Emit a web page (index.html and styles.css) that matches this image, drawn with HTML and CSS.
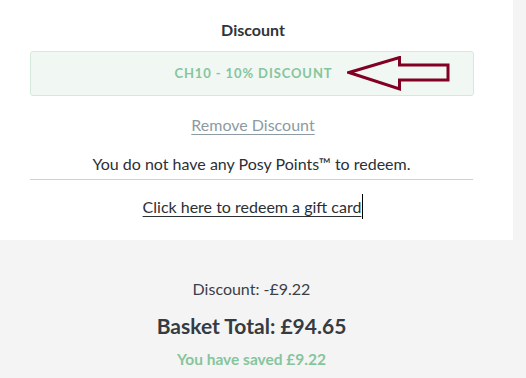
FILE: index.html
```html
<!DOCTYPE html>
<html>
<head>
<meta charset="utf-8">
<link rel="stylesheet" href="styles.css">
</head>
<body>
<div class="page">
  <section class="panel">
    <h2 class="title">Discount</h2>
    <div class="code-box">
      <span class="code">CH10 - 10% DISCOUNT</span>
      <svg class="arrow" width="104" height="36" viewBox="0 0 104 36">
        <path d="M2 16.5 L52.5 1.5 L52.5 9 L101 9 L101 24 L52.5 24 L52.5 33 Z" fill="none" stroke="#820021" stroke-width="3" stroke-linejoin="miter"/>
      </svg>
    </div>
    <a class="remove">Remove Discount</a>
    <p class="points">You do not have any Posy Points™ to redeem.</p>
    <div class="gift-row"><a class="gift">Click here to redeem a gift card</a><span class="caret"></span></div>
  </section>
  <section class="totals">
    <p class="disc">Discount: -£9.22</p>
    <p class="total">Basket Total: £94.65</p>
    <p class="saved">You have saved £9.22</p>
  </section>
</div>
</body>
</html>
```
FILE: styles.css
```css
html, body {
  margin: 0;
  padding: 0;
  background: #f4f4f4;
}
body {
  font-family: Lato, "Noto Sans", sans-serif;
  color: #353b40;
}
.page {
  width: 526px;
  height: 378px;
  overflow: hidden;
}
.panel {
  width: 513px;
  height: 240px;
  background: #ffffff;
  box-sizing: border-box;
  padding: 21px 0 0 30px;
  display: flex;
  flex-direction: column;
  align-items: flex-start;
}
.title {
  margin: 0;
  width: 443px;
  text-align: center;
  font-size: 16px;
  font-weight: 700;
  line-height: 18px;
  color: #2f3438;
  padding-left: 3px;
  box-sizing: border-box;
}
.code-box {
  margin-top: 12px;
  width: 444px;
  height: 45px;
  box-sizing: border-box;
  border: 1px solid #d3eadb;
  border-radius: 3px;
  background: #f1f8f4;
  position: relative;
  display: flex;
  align-items: center;
  justify-content: center;
}
.code {
  font-size: 13px;
  font-weight: 700;
  letter-spacing: 0.9px;
  color: #86c59c;
  margin-left: 3px;
  margin-top: -1px;
}
.arrow {
  position: absolute;
  left: 316px;
  top: 4px;
}
.remove {
  margin-top: 19px;
  width: 443px;
  text-align: center;
  font-size: 16px;
  line-height: 20px;
  color: #8c9aa3;
  text-decoration: underline;
  text-underline-offset: 3px;
  padding-left: 3px;
  box-sizing: border-box;
}
.points {
  margin: 19px 0 0 0;
  width: 443px;
  text-align: center;
  font-size: 16px;
  line-height: 20px;
  padding-bottom: 5px;
  border-bottom: 1px solid #d0d0d0;
  color: #2b3035;
}
.gift-row {
  margin-top: 17px;
  width: 443px;
  display: flex;
  justify-content: center;
  align-items: flex-start;
  padding-left: 3px;
  box-sizing: border-box;
}
.gift {
  font-size: 16px;
  line-height: 20px;
  color: #2b3035;
  text-decoration: underline;
  text-underline-offset: 3px;
}
.caret {
  width: 1px;
  height: 25px;
  background: #000;
  margin-top: -3px;
  margin-left: 1px;
}
.totals {
  width: 503px;
  display: flex;
  flex-direction: column;
  align-items: center;
  padding-top: 39px;
}
.totals p {
  margin: 0;
}
.disc {
  font-size: 16px;
  line-height: 20px;
  color: #3b4045;
}
.total {
  margin-top: 14px !important;
  font-size: 21px;
  font-weight: 700;
  line-height: 26px;
  color: #353b40;
}
.saved {
  margin-top: 11px !important;
  font-size: 15.5px;
  font-weight: 700;
  line-height: 18px;
  color: #86c59c;
}
```
